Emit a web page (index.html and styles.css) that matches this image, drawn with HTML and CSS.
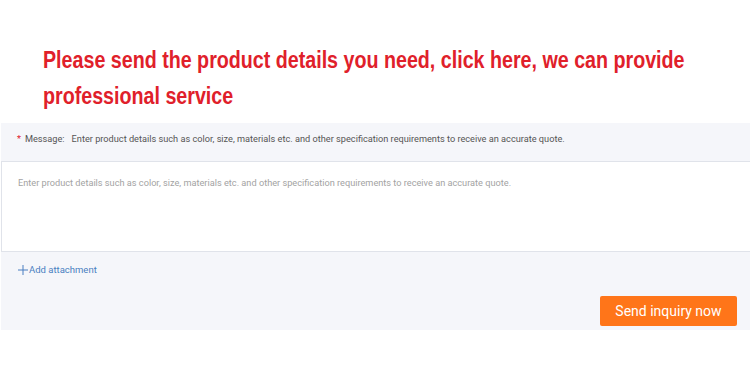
FILE: index.html
```html
<!DOCTYPE html>
<html lang="en">
<head>
  <meta charset="UTF-8">
  <title>Send inquiry</title>
  <link rel="stylesheet" href="styles.css">
</head>
<body>
  <div class="promo">
    <h1 class="promo-text">Please send the product details you need, click here, we can provide<br>professional service</h1>
  </div>

  <div class="inquiry">
    <div class="inquiry-label">
      <span class="req">*</span> Message:<span class="hint">Enter product details such as color, size, materials etc. and other specification requirements to receive an accurate quote.</span>
    </div>
    <textarea class="inquiry-text" placeholder="Enter product details such as color, size, materials etc. and other specification requirements to receive an accurate quote."></textarea>
    <a class="attach" href="#">
      <svg width="10" height="10" viewBox="0 0 10 10"><path d="M5 0v10M0 5h10" stroke="#4a7fc1" stroke-width="1"/></svg>Add attachment
    </a>
    <div class="inquiry-foot">
      <button class="send-btn">Send inquiry now</button>
    </div>
  </div>
</body>
</html>
```

FILE: styles.css
```css
* {
  margin: 0;
  padding: 0;
  box-sizing: border-box;
}

body {
  background: #fff;
  font-family: Roboto, "Liberation Sans", sans-serif;
}

.promo {
  height: 123px;
  padding: 42px 0 0 43px;
  overflow: hidden;
}

/* the banner font is a narrow grotesque, so squeeze Arial-width text */
.promo-text {
  display: inline-block;
  white-space: nowrap;
  font-family: "Liberation Sans", Arial, sans-serif;
  font-size: 23px;
  font-weight: bold;
  line-height: 36px;
  color: #e0202a;
  transform: scaleX(0.855);
  transform-origin: left top;
}

.inquiry {
  margin-left: 1px;
  background: #f5f6fa;
  height: 207px;
}

.inquiry-label {
  display: flex;
  align-items: flex-start;
  height: 38px;
  padding: 10px 0 0 16px;
  font-size: 9.2px;
  line-height: 11px;
  color: #555;
}

.req {
  color: #e0202a;
  margin-right: 4px;
}

.hint {
  margin-left: 7px;
}

.inquiry-text {
  display: block;
  width: 100%;
  height: 91px;
  border: 1px solid #e0e3ea;
  border-right: none;
  background: #fff;
  padding: 15px 16px;
  font-family: Roboto, "Liberation Sans", sans-serif;
  font-size: 9.2px;
  resize: none;
  outline: none;
}

.inquiry-text::placeholder {
  color: #a3a3a3;
}

.attach {
  display: flex;
  align-items: center;
  gap: 1px;
  padding: 12px 0 0 17px;
  font-size: 9.5px;
  color: #4a7fc1;
  text-decoration: none;
}

.inquiry-foot {
  display: flex;
  justify-content: flex-end;
  padding: 21px 13px 0 0;
}

.send-btn {
  width: 137px;
  height: 30px;
  border: none;
  border-radius: 2px;
  background: #ff7519;
  color: #fff;
  font-family: Roboto, "Liberation Sans", sans-serif;
  font-size: 14px;
}
```
